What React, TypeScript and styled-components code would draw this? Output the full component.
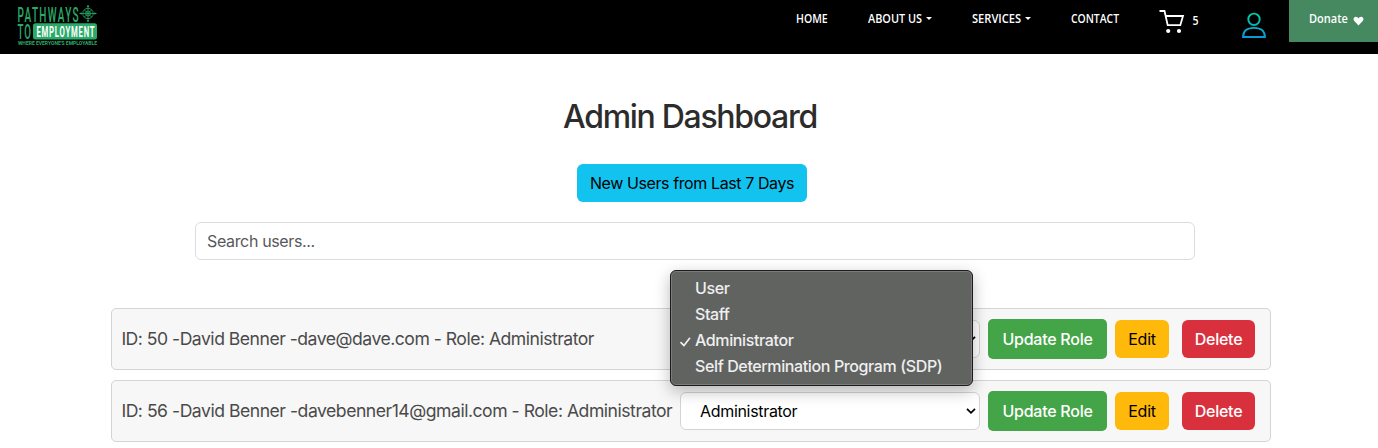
import React from "react";
import styled, { createGlobalStyle } from "styled-components";

const GlobalStyle = createGlobalStyle`
  * { box-sizing: border-box; }
  body {
    margin: 0;
    background: #fff;
    font-family: Inter, "Liberation Sans", sans-serif;
    font-size: 16px;
    overflow: hidden;
  }
  button, input { font-family: inherit; font-size: 16px; margin: 0; }
`;

const Header = styled.header`
  height: 54px;
  background: #000;
  display: flex;
  align-items: flex-start;
  padding-left: 17px;
`;

const Logo = styled.svg`
  display: block;
  flex: none;
  overflow: visible;
`;

const Nav = styled.nav`
  display: flex;
  align-items: flex-start;
  margin-left: auto;
  color: #fff;
  font-family: "Open Sans", "Noto Sans", sans-serif;
  font-size: 12.5px;
  font-weight: 600;
  line-height: 16px;
  white-space: nowrap;
`;

const NavItem = styled.a<{ $width: number }>`
  display: flex;
  align-items: center;
  width: ${(p) => p.$width}px;
  margin-top: 11px;
`;

const NavText = styled.span<{ $box: number; $scale: number }>`
  width: ${(p) => p.$box}px;
  > span {
    display: inline-block;
    transform: scaleX(${(p) => p.$scale});
    transform-origin: left center;
  }
`;

const Caret = styled.i`
  margin: 0 0 1px 4px;
  border-top: 3px solid #fff;
  border-left: 3px solid transparent;
  border-right: 3px solid transparent;
`;

const Cart = styled.a`
  display: flex;
  width: 83px;
  font-size: 12px;
  svg { margin-top: 9px; }
`;

const Count = styled.span`
  margin: 13px 0 0 7px;
  transform: scaleX(0.88);
`;

const Account = styled.a`
  width: 47px;
  svg { display: block; margin-top: 12px; }
`;

const Donate = styled.a`
  display: flex;
  width: 89px;
  height: 42px;
  padding: 11px 0 0 20px;
  background: #46885f;
  svg { margin: 5px 0 0 5px; }
`;

const Main = styled.main`
  display: flex;
  flex-direction: column;
  align-items: center;
  padding-top: 42px;
`;

const Title = styled.h1`
  margin: 0 0 0 2px;
  height: 42px;
  line-height: 41px;
  font-size: 32px;
  font-weight: 500;
  letter-spacing: -1.3px;
  color: #2c2c2c;
  white-space: nowrap;
`;

const NewUsers = styled.button`
  width: 230px;
  height: 38px;
  margin: 26px 0 20px 6px;
  padding: 0;
  border: 0;
  border-radius: 6px;
  background: #12c3f0;
  color: #000;
  letter-spacing: -0.4px;
  white-space: nowrap;
`;

const Search = styled.input`
  width: 1000px;
  height: 38px;
  margin-left: 12px;
  padding: 0 11px;
  border: 1px solid #d9dde1;
  border-radius: 6px;
  outline: 0;
  letter-spacing: -0.35px;
  &::placeholder { color: #56595c; opacity: 1; }
`;

const UserList = styled.ul`
  display: flex;
  flex-direction: column;
  gap: 10px;
  width: 1160px;
  margin: 48px 0 0 4px;
  padding: 0;
  list-style: none;
`;

const UserRow = styled.li`
  display: flex;
  align-items: center;
  height: 62px;
  padding: 0 15px 0 9px;
  border: 1px solid #d4d4d4;
  border-radius: 5px;
  background: #f7f7f7;
`;

const UserText = styled.span<{ $spacing: number }>`
  width: 559px;
  flex: none;
  padding: 0 0 2px 0.4px;
  color: #4a4a4a;
  font-size: 17.6px;
  letter-spacing: ${(p) => p.$spacing}px;
  white-space: nowrap;
`;

const SelectWrap = styled.div`
  position: relative;
  flex: none;
`;

const Select = styled.div`
  display: flex;
  align-items: center;
  width: 300px;
  height: 38px;
  padding: 0 3px 0 19px;
  border: 1px solid #d4d4d4;
  border-radius: 6px;
  background: #fff;
  color: #000;
  letter-spacing: -0.32px;
  svg { margin-left: auto; }
`;

const Menu = styled.div`
  position: absolute;
  z-index: 2;
  left: -10px;
  top: -50px;
  width: 303px;
  height: 116px;
  padding: 4px 0 0 9px;
  border: 1px solid #1b1b1b;
  border-radius: 6px;
  background: #616361;
  box-shadow: inset 0 0 0 1px #7b7c7b, 0 5px 16px rgba(0, 0, 0, 0.27);
`;

const Option = styled.div`
  display: flex;
  align-items: center;
  height: 26px;
  color: #efefef;
  font-weight: 500;
  letter-spacing: -0.38px;
  white-space: nowrap;
`;

const CheckSlot = styled.span`
  display: flex;
  width: 15px;
  padding-top: 3px;
`;

const Action = styled.button<{ $bg: string; $width: number; $height: number; $gap: number; $dark?: boolean }>`
  flex: none;
  width: ${(p) => p.$width}px;
  height: ${(p) => p.$height}px;
  margin-left: ${(p) => p.$gap}px;
  padding: 0;
  border: 0;
  border-radius: ${(p) => (p.$height > 38 ? 5 : 6)}px;
  background: ${(p) => p.$bg};
  color: ${(p) => (p.$dark ? "#000" : "#fff")};
  font-weight: ${(p) => (p.$dark ? 400 : 500)};
  letter-spacing: -0.25px;
  white-space: nowrap;
`;

const GREEN = "#2aaa68";

function BrandLogo() {
  return (
    <Logo width="84" height="50" viewBox="0 -4 84 50" fontFamily="Roboto, sans-serif">
      <text x="0.5" y="17.7" fontSize="19.5" fontWeight="500" fill={GREEN} letterSpacing="2.6" textLength="62.500" lengthAdjust="spacingAndGlyphs">PATHWAYS</text>
      <text x="0.5" y="35" fontSize="19.5" fontWeight="500" fill={GREEN} letterSpacing="2" textLength="14.500" lengthAdjust="spacingAndGlyphs">TO</text>
      <rect x="16" y="19.3" width="64" height="16.2" rx="2.5" fill={GREEN} />
      <text x="19.4" y="33" fontSize="15.5" fontWeight="700" fill="#fff" letterSpacing="1.6" textLength="59" lengthAdjust="spacingAndGlyphs">EMPLOYMENT</text>
      <text x="1" y="41.2" fontSize="5" fontWeight="700" fill={GREEN} textLength="79" lengthAdjust="spacingAndGlyphs">WHERE EVERYONE'S EMPLOYABLE</text>
      <g fill="none" stroke={GREEN} strokeWidth="0.8">
        <circle cx="71" cy="9.5" r="5.2" />
        <circle cx="71" cy="9.5" r="2.5" />
        <path d="M71 1v17M62.5 9.5h17M67.3 5.8l7.4 7.4M74.7 5.8l-7.4 7.4" />
      </g>
      <path d="M69.8 3L71 1l1.2 2zM69.8 16l1.2 2 1.2-2zM64.5 8.3l-2 1.2 2 1.2zM77.5 8.3l2 1.2-2 1.2z" fill={GREEN} />
    </Logo>
  );
}

function CartIcon() {
  return (
    <svg width="26" height="26" viewBox="0 0 26 26" fill="none" stroke="#fff" strokeWidth="1.8">
      <path d="M0.5 2h5l3.2 14.2h12.6L24 7H6.7" />
      <circle cx="9.2" cy="22" r="2.1" fill="#fff" stroke="none" />
      <circle cx="20" cy="22" r="2.1" fill="#fff" stroke="none" />
    </svg>
  );
}

function AccountIcon() {
  return (
    <svg width="25" height="27" viewBox="0 0 25 27" fill="none" stroke="url(#account)" strokeWidth="1.9">
      <defs>
        <linearGradient id="account" gradientUnits="userSpaceOnUse" x1="0" y1="1" x2="0" y2="26">
          <stop offset="0" stopColor="#00d0a0" />
          <stop offset="1" stopColor="#0798dc" />
        </linearGradient>
      </defs>
      <circle cx="12" cy="7.3" r="5.7" />
      <path d="M1.1 25c0-6 4.3-9.1 10.9-9.1S22.900 19 22.900 25z" />
    </svg>
  );
}

function Chevron() {
  return (
    <svg width="10" height="8" viewBox="0 0 10 8" fill="none" stroke="#000" strokeWidth="1.8">
      <path d="M1 1.8L5 5.8l4-4" />
    </svg>
  );
}

function RoleMenu() {
  const roles = ["User", "Staff", "Administrator", "Self Determination Program (SDP)"];
  return (
    <Menu>
      {roles.map((role) => (
        <Option key={role}>
          <CheckSlot>
            {role === "Administrator" && (
              <svg width="11" height="10" viewBox="0 0 11 10" fill="none" stroke="#efefef" strokeWidth="1.7" strokeLinecap="round" strokeLinejoin="round">
                <path d="M1 5.6l3 3L9.600 1.300" />
              </svg>
            )}
          </CheckSlot>
          {role}
        </Option>
      ))}
    </Menu>
  );
}

const users = [
  { id: 50, name: "David Benner", email: "dave@dave.com", role: "Administrator", open: true, spacing: -0.5 },
  { id: 56, name: "David Benner", email: "davebenner14@gmail.com", role: "Administrator", open: false, spacing: -0.48 },
];

const links = [
  { label: "HOME", width: 72, box: 32, scale: 0.84, menu: false },
  { label: "ABOUT US", width: 103.5, box: 54, scale: 0.87, menu: true },
  { label: "SERVICES", width: 99.5, box: 49.5, scale: 0.89, menu: true },
  { label: "CONTACT", width: 88, box: 48, scale: 0.83, menu: false },
];

export default function App() {
  return (
    <>
      <GlobalStyle />
      <Header>
        <BrandLogo />
        <Nav>
          {links.map((l) => (
            <NavItem key={l.label} $width={l.width}>
              <NavText $box={l.box} $scale={l.scale}><span>{l.label}</span></NavText>
              {l.menu && <Caret />}
            </NavItem>
          ))}
          <Cart><CartIcon /><Count>5</Count></Cart>
          <Account><AccountIcon /></Account>
          <Donate>
            <NavText $box={39} $scale={0.88}><span>Donate</span></NavText>
            <svg width="11" height="10" viewBox="0 0 11 10" fill="#fff">
              <path d="M5.500 9.500L1.300 5C-.3 3 .8.700 2.800.700c1.300 0 2.200.8 2.700 1.800C6 1.500 6.900.700 8.200.700c2 0 3.100 2.300 1.500 4.300z" />
            </svg>
          </Donate>
        </Nav>
      </Header>
      <Main>
        <Title>Admin Dashboard</Title>
        <NewUsers>New Users from Last 7 Days</NewUsers>
        <Search placeholder="Search users..." />
        <UserList>
          {users.map((u) => (
            <UserRow key={u.id}>
              <UserText $spacing={u.spacing}>{`ID: ${u.id} -${u.name} -${u.email} - Role: ${u.role}`}</UserText>
              <SelectWrap>
                <Select>{!u.open && u.role}<Chevron /></Select>
                {u.open && <RoleMenu />}
              </SelectWrap>
              <Action $bg="#43a547" $width={119} $height={40} $gap={8}>Update Role</Action>
              <Action $bg="#ffb90b" $width={54} $height={38} $gap={8} $dark>Edit</Action>
              <Action $bg="#d9303e" $width={73} $height={38} $gap={13}>Delete</Action>
            </UserRow>
          ))}
        </UserList>
      </Main>
    </>
  );
}
